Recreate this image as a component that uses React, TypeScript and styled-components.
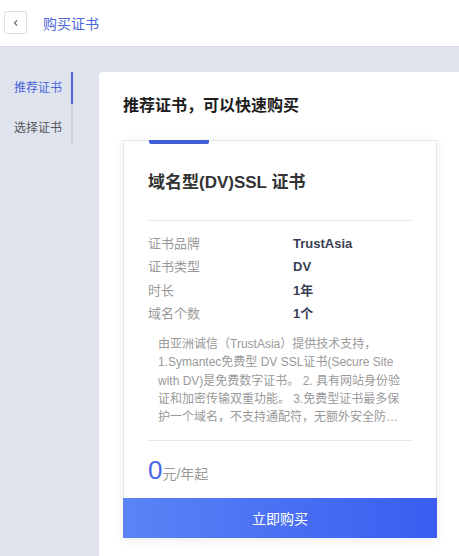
import React from 'react';
import styled, { createGlobalStyle } from 'styled-components';

const GlobalStyle = createGlobalStyle`
  html, body {
    margin: 0;
    padding: 0;
    height: 100%;
    overflow: hidden;
  }
  body {
    font-family: "Liberation Sans", "Noto Sans CJK SC", sans-serif;
    background: #dfe3ee;
  }
`;

// ----- layout -----
const Page = styled.div`
  width: 459px;
  height: 556px;
  display: flex;
  flex-direction: column;
  background: #dfe3ee;
`;

const Header = styled.div`
  height: 47px;
  flex-shrink: 0;
  background: #fff;
  border-bottom: 1px solid #d8dce6;
  display: flex;
  align-items: center;
  padding-left: 4px;
  box-sizing: border-box;
`;

const BackButton = styled.button`
  width: 23px;
  height: 23px;
  padding: 0;
  border: 1px solid #dcdfe6;
  border-radius: 2px;
  background: #fff;
  display: flex;
  align-items: center;
  justify-content: center;
  margin-right: 16px;
  margin-top: -1px;
`;

const HeaderTitle = styled.span`
  font-size: 14px;
  color: #4a66d8;
`;

const Body = styled.div`
  flex: 1;
  display: flex;
  padding-top: 25px;
  min-height: 0;
`;

const Sidebar = styled.div`
  width: 99px;
  flex-shrink: 0;
  display: flex;
  padding-left: 14px;
  box-sizing: border-box;
`;

const NavList = styled.div`
  display: flex;
  flex-direction: column;
  border-right: 2px solid #c9cdd8;
  height: 71px;
  padding-right: 9px;
`;

const NavItem = styled.div<{ $active?: boolean }>`
  height: 32px;
  line-height: 32px;
  font-size: 12px;
  color: ${({ $active }) => ($active ? '#4a66d8' : '#555')};
  position: relative;
  margin-bottom: 8px;

  &::after {
    content: '';
    display: ${({ $active }) => ($active ? 'block' : 'none')};
    position: absolute;
    right: -11px;
    top: 0;
    width: 2px;
    height: 32px;
    background: #4a66d8;
  }
`;

const Panel = styled.div`
  flex: 1;
  background: #fff;
  border-top-left-radius: 4px;
  padding: 23px 0 0 24px;
  overflow: hidden;
`;

const PanelTitle = styled.h2`
  margin: 0 0 23px;
  font-size: 16px;
  font-weight: 600;
  color: #1c1c1c;
  line-height: 22px;
`;

// ----- card -----
const Card = styled.div`
  width: 314px;
  background: #fff;
  border: 1px solid #e4e6ee;
  box-sizing: border-box;
  box-shadow: 0 2px 10px rgba(0, 0, 0, 0.08);
  position: relative;
`;

const TopBar = styled.div`
  position: absolute;
  left: 25px;
  top: -1px;
  width: 60px;
  height: 4px;
  border-radius: 0 0 2px 2px;
  background: #3f5fd9;
`;

const CardInner = styled.div`
  padding: 0 24px;
`;

const CardTitle = styled.div`
  font-size: 17px;
  font-weight: 600;
  color: #333;
  padding: 30px 0 0;
  height: 49px;
  line-height: 24px;
  border-bottom: 1px solid #e8eaf0;
`;

const InfoList = styled.div`
  padding: 11px 0 8px;
`;

const InfoRow = styled.div`
  display: grid;
  grid-template-columns: 145px 1fr;
  height: 23.3px;
  line-height: 23px;
  font-size: 13px;
`;

const Label = styled.span`
  color: #999;
`;

const Value = styled.span`
  color: #3a3f55;
  font-weight: 700;
`;

const DescBox = styled.div`
  padding: 2px 10px 13px;
  border-bottom: 1px solid #e8eaf0;
`;

const Desc = styled.p`
  margin: 0;
  font-size: 12px;
  line-height: 18.3px;
  color: #999;
  display: -webkit-box;
  -webkit-line-clamp: 5;
  -webkit-box-orient: vertical;
  overflow: hidden;
`;

const Price = styled.div`
  height: 57px;
  display: flex;
  align-items: center;
  padding-top: 2px;
  box-sizing: border-box;
`;

const PriceNum = styled.span`
  font-size: 26px;
  color: #4a66e6;
  line-height: 1;
`;

const PriceUnit = styled.span`
  font-size: 14px;
  color: #999;
  margin-top: 6px;
`;

const BuyButton = styled.button`
  display: block;
  width: calc(100% + 2px);
  margin: 0 -1px -1px;
  height: 40px;
  border: none;
  background: linear-gradient(90deg, #5b84f6 0%, #3a5cf0 100%);
  color: #fff;
  font-size: 14px;
  font-family: inherit;
`;

const info: [string, string][] = [
  ['证书品牌', 'TrustAsia'],
  ['证书类型', 'DV'],
  ['时长', '1年'],
  ['域名个数', '1个'],
];

const App: React.FC = () => {
  return (
    <Page>
      <GlobalStyle />
      <Header>
        <BackButton>
          <svg width="8" height="8" viewBox="0 0 8 8">
            <path d="M5 1.4 L2.6 4 L5 6.6" fill="none" stroke="#555" strokeWidth="1.1" />
          </svg>
        </BackButton>
        <HeaderTitle>购买证书</HeaderTitle>
      </Header>
      <Body>
        <Sidebar>
          <NavList>
            <NavItem $active>推荐证书</NavItem>
            <NavItem>选择证书</NavItem>
          </NavList>
        </Sidebar>
        <Panel>
          <PanelTitle>推荐证书，可以快速购买</PanelTitle>
          <Card>
            <TopBar />
            <CardInner>
              <CardTitle>域名型(DV)SSL 证书</CardTitle>
              <InfoList>
                {info.map(([k, v]) => (
                  <InfoRow key={k}>
                    <Label>{k}</Label>
                    <Value>{v}</Value>
                  </InfoRow>
                ))}
              </InfoList>
              <DescBox>
                <Desc>
                  由亚洲诚信（TrustAsia）提供技术支持，1.Symantec免费型 DV SSL证书(Secure Site with DV)是免费数字证书。 2. 具有网站身份验证和加密传输双重功能。 3.免费型证书最多保护一个域名，不支持通配符，无额外安全防护功能，适用于个人网站。
                </Desc>
              </DescBox>
              <Price>
                <PriceNum>0</PriceNum>
                <PriceUnit>元/年起</PriceUnit>
              </Price>
            </CardInner>
            <BuyButton>立即购买</BuyButton>
          </Card>
        </Panel>
      </Body>
    </Page>
  );
};

export default App;
